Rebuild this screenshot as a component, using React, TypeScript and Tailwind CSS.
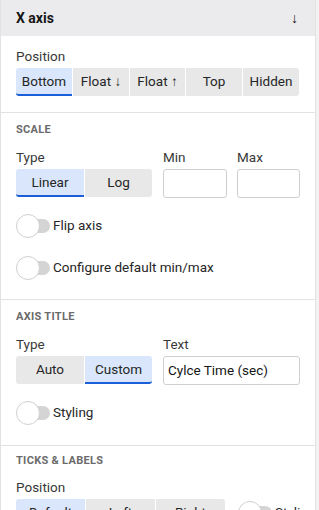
import React from "react";

const font = { fontFamily: 'Roboto, "Noto Sans", sans-serif' };

function Seg({ items, active, widths }: { items: string[]; active: number; widths: string[] }) {
  return (
    <div className="flex gap-px">
      {items.map((it, i) => (
        <div
          key={it}
          className={`h-[28px] flex items-center justify-center text-[13.5px] leading-none text-[#262626] ${widths[i]} ${
            i === active ? "bg-[#d9e6fb] border-b-2 border-[#1a5fd8] pt-[2px]" : "bg-[#e8e8e8]"
          } ${i === 0 ? "rounded-l-[3px]" : ""} ${i === items.length - 1 ? "rounded-r-[3px]" : ""}`}
        >
          {it}
        </div>
      ))}
    </div>
  );
}

function Toggle({ label }: { label: string }) {
  return (
    <div className="flex items-center gap-[3px] h-[24px]">
      <div className="relative w-[34px] h-[24px] shrink-0">
        <div className="absolute left-[12px] top-[5px] w-[22px] h-[14px] rounded-r-full bg-[#d4d4d4]" />
        <div className="absolute left-0 top-0 w-[24px] h-[24px] rounded-full bg-white border border-[#d0d0d0]" />
      </div>
      <span className="text-[13.5px] leading-none text-[#262626] whitespace-nowrap">{label}</span>
    </div>
  );
}

function Label({ children }: { children: React.ReactNode }) {
  return <div className="text-[13.5px] leading-[16px] text-[#393939] mb-[4px]">{children}</div>;
}

function Heading({ children }: { children: React.ReactNode }) {
  return (
    <div className="text-[11px] font-bold tracking-[0.3px] text-[#6b6b6b] leading-[11px] h-[11px]">{children}</div>
  );
}

export default function App() {
  return (
    <div className="w-[319px] h-[510px] bg-[#f2f2f2] overflow-hidden" style={font}>
      <div className="w-[316px] h-full bg-white border-l border-r border-[#e2e2e2]">
        <div className="h-[36px] bg-[#ebeaec] flex items-center justify-between pl-[15px] pr-[17px]">
          <span className="text-[14px] font-bold text-[#161616]">X axis</span>
          <span className="text-[14px] font-bold text-[#161616]">↓</span>
        </div>

        <div className="px-[15px] pt-[12px] pb-[16px] border-b border-[#e2e2e2]">
          <Label>Position</Label>
          <Seg
            items={["Bottom", "Float ↓", "Float ↑", "Top", "Hidden"]}
            active={0}
            widths={["w-[56px]", "w-[56px]", "w-[55px]", "w-[56px]", "w-[56px]"]}
          />
        </div>

        <div className="px-[15px] pt-[11px] pb-[19px] border-b border-[#e2e2e2]">
          <Heading>SCALE</Heading>
          <div className="flex mt-[14px]">
            <div className="w-[147px]">
              <Label>Type</Label>
              <Seg items={["Linear", "Log"]} active={0} widths={["w-[68px]", "w-[67px]"]} />
            </div>
            <div className="w-[74px]">
              <Label>Min</Label>
              <div className="w-[64px] h-[29px] border border-[#cfcfcf] rounded-[3px]" />
            </div>
            <div>
              <Label>Max</Label>
              <div className="w-[63px] h-[29px] border border-[#cfcfcf] rounded-[3px]" />
            </div>
          </div>
          <div className="mt-[16px] flex flex-col gap-[18px]">
            <Toggle label="Flip axis" />
            <Toggle label="Configure default min/max" />
          </div>
        </div>

        <div className="px-[15px] pt-[11px] pb-[20px] border-b border-[#e2e2e2]">
          <Heading>AXIS TITLE</Heading>
          <div className="flex mt-[14px]">
            <div className="w-[147px]">
              <Label>Type</Label>
              <Seg items={["Auto", "Custom"]} active={1} widths={["w-[68px]", "w-[67px]"]} />
            </div>
            <div>
              <Label>Text</Label>
              <div className="w-[137px] h-[29px] border border-[#cfcfcf] rounded-[3px] flex items-center px-[4px] text-[13.5px] text-[#161616] whitespace-nowrap">
                Cylce Time (sec)
              </div>
            </div>
          </div>
          <div className="mt-[16px]">
            <Toggle label="Styling" />
          </div>
        </div>

        <div className="px-[15px] pt-[9px]">
          <Heading>TICKS &amp; LABELS</Heading>
          <div className="flex mt-[13px] items-start">
            <div className="w-[222px] shrink-0">
              <Label>Position</Label>
              <Seg items={["Default", "Left", "Right"]} active={0} widths={["w-[69px]", "w-[69px]", "w-[69px]"]} />
            </div>
            <div className="mt-[22px]">
              <Toggle label="Styling" />
            </div>
          </div>
        </div>
      </div>
    </div>
  );
}
